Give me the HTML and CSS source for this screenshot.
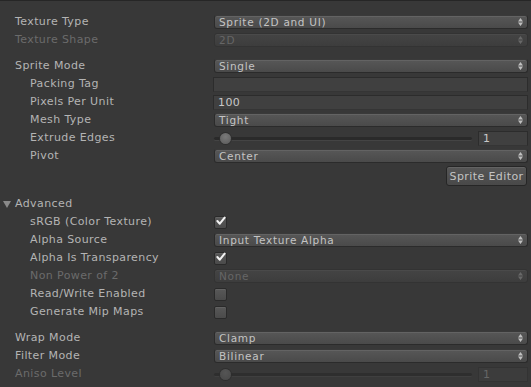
FILE: index.html
```html
<!DOCTYPE html>
<html>
<head>
<meta charset="utf-8">
<link rel="stylesheet" href="styles.css">
</head>
<body>
<div class="inspector">
  <div class="group">
    <div class="row"><span class="label">Texture Type</span><div class="popup"><span>Sprite (2D and UI)</span><svg class="arrows" width="5" height="8" viewBox="0 0 5 8"><path d="M0 3.5 L2.5 0 L5 3.5Z M0 4.5 L2.5 8 L5 4.5Z"/></svg></div></div>
    <div class="row disabled"><span class="label">Texture Shape</span><div class="popup"><span>2D</span><svg class="arrows" width="5" height="8" viewBox="0 0 5 8"><path d="M0 3.5 L2.5 0 L5 3.5Z M0 4.5 L2.5 8 L5 4.5Z"/></svg></div></div>
  </div>
  <div class="group">
    <div class="row"><span class="label">Sprite Mode</span><div class="popup"><span>Single</span><svg class="arrows" width="5" height="8" viewBox="0 0 5 8"><path d="M0 3.5 L2.5 0 L5 3.5Z M0 4.5 L2.5 8 L5 4.5Z"/></svg></div></div>
    <div class="row"><span class="label indent">Packing Tag</span><div class="field"></div></div>
    <div class="row"><span class="label indent">Pixels Per Unit</span><div class="field"><span>100</span></div></div>
    <div class="row"><span class="label indent">Mesh Type</span><div class="popup"><span>Tight</span><svg class="arrows" width="5" height="8" viewBox="0 0 5 8"><path d="M0 3.5 L2.5 0 L5 3.5Z M0 4.5 L2.5 8 L5 4.5Z"/></svg></div></div>
    <div class="row"><span class="label indent">Extrude Edges</span><div class="slider"><div class="track"><div class="thumb"></div></div><div class="field num"><span>1</span></div></div></div>
    <div class="row"><span class="label indent">Pivot</span><div class="popup"><span>Center</span><svg class="arrows" width="5" height="8" viewBox="0 0 5 8"><path d="M0 3.5 L2.5 0 L5 3.5Z M0 4.5 L2.5 8 L5 4.5Z"/></svg></div></div>
    <div class="btnrow"><button class="button">Sprite Editor</button></div>
  </div>
  <div class="group">
    <div class="row"><span class="label foldout"><svg class="tri" width="8" height="8" viewBox="0 0 8 8"><path d="M0 1 L8 1 L4 8Z"/></svg>Advanced</span></div>
    <div class="row"><span class="label indent">sRGB (Color Texture)</span><div class="check on"><svg width="11" height="10" viewBox="0 0 11 10"><path d="M1.5 5 L4.2 8 L9.5 1.2" fill="none" stroke="#f2f2f2" stroke-width="2.2" stroke-linecap="round" stroke-linejoin="round"/></svg></div></div>
    <div class="row"><span class="label indent">Alpha Source</span><div class="popup"><span>Input Texture Alpha</span><svg class="arrows" width="5" height="8" viewBox="0 0 5 8"><path d="M0 3.5 L2.5 0 L5 3.5Z M0 4.5 L2.5 8 L5 4.5Z"/></svg></div></div>
    <div class="row"><span class="label indent">Alpha Is Transparency</span><div class="check on"><svg width="11" height="10" viewBox="0 0 11 10"><path d="M1.5 5 L4.2 8 L9.5 1.2" fill="none" stroke="#f2f2f2" stroke-width="2.2" stroke-linecap="round" stroke-linejoin="round"/></svg></div></div>
    <div class="row disabled"><span class="label indent">Non Power of 2</span><div class="popup"><span>None</span><svg class="arrows" width="5" height="8" viewBox="0 0 5 8"><path d="M0 3.5 L2.5 0 L5 3.5Z M0 4.5 L2.5 8 L5 4.5Z"/></svg></div></div>
    <div class="row"><span class="label indent">Read/Write Enabled</span><div class="check"></div></div>
    <div class="row"><span class="label indent">Generate Mip Maps</span><div class="check"></div></div>
  </div>
  <div class="group">
    <div class="row"><span class="label">Wrap Mode</span><div class="popup"><span>Clamp</span><svg class="arrows" width="5" height="8" viewBox="0 0 5 8"><path d="M0 3.5 L2.5 0 L5 3.5Z M0 4.5 L2.5 8 L5 4.5Z"/></svg></div></div>
    <div class="row"><span class="label">Filter Mode</span><div class="popup"><span>Bilinear</span><svg class="arrows" width="5" height="8" viewBox="0 0 5 8"><path d="M0 3.5 L2.5 0 L5 3.5Z M0 4.5 L2.5 8 L5 4.5Z"/></svg></div></div>
    <div class="row disabled"><span class="label">Aniso Level</span><div class="slider"><div class="track"><div class="thumb"></div></div><div class="field num"><span>1</span></div></div></div>
  </div>
</div>
</body>
</html>
```

FILE: styles.css
```css
html, body {
  margin: 0;
  padding: 0;
  background: #383838;
}
body {
  width: 531px;
  height: 387px;
  overflow: hidden;
  font-family: "DejaVu Sans", "Liberation Sans", sans-serif;
  font-size: 11px;
  color: #b4b4b4;
}
.inspector {
  border-top: 1px solid #262626;
  padding: 12px 3px 0 0;
  display: flex;
  flex-direction: column;
  gap: 8px;
}
.group {
  display: flex;
  flex-direction: column;
}
.row {
  height: 18px;
  display: grid;
  grid-template-columns: 214px 1fr;
  align-items: center;
}
.label {
  padding-left: 15px;
  white-space: nowrap;
  line-height: 18px;
  letter-spacing: 0.4px;
}
.label.indent {
  padding-left: 30px;
}
.label.foldout {
  padding-left: 3px;
  display: flex;
  align-items: center;
  gap: 4px;
}
.tri {
  fill: #8a8a8a;
}
.disabled .label {
  color: #6b6b6b;
}
.popup {
  height: 14px;
  box-sizing: border-box;
  border-radius: 3px;
  background: linear-gradient(#575757, #4a4a4a);
  border: 1px solid #2b2b2b;
  border-top-color: #3a3a3a;
  box-shadow: inset 0 1px 0 #636363;
  display: flex;
  align-items: center;
  justify-content: space-between;
  padding: 0 4px 0 4px;
  color: #c4c4c4;
  font-size: 10.5px;
  letter-spacing: 0.7px;
}
.popup .arrows {
  fill: #c0c0c0;
}
.disabled .popup {
  background: linear-gradient(#444, #3d3d3d);
  box-shadow: inset 0 1px 0 #4a4a4a;
  border-color: #333;
  color: #666;
}
.disabled .popup .arrows {
  fill: #686868;
}
.field {
  height: 15px;
  box-sizing: border-box;
  background: #404040;
  border: 1px solid #2c2c2c;
  border-bottom-color: #353535;
  margin-left: -1px;
  padding-left: 4px;
  display: flex;
  align-items: center;
  color: #c8c8c8;
  font-size: 11px;
  letter-spacing: 0.4px;
}
.slider {
  display: flex;
  align-items: center;
  gap: 6px;
}
.track {
  flex: 1;
  height: 3px;
  border-radius: 2px;
  background: #2a2a2a;
  box-shadow: 0 1px 0 #444;
  position: relative;
}
.thumb {
  position: absolute;
  left: 6px;
  top: -4px;
  width: 11px;
  height: 11px;
  border-radius: 50%;
  background: radial-gradient(circle at 50% 35%, #7a7a7a, #5a5a5a);
  box-shadow: 0 0 0 1px #2e2e2e;
}
.field.num {
  width: 50px;
  margin-left: 0;
  flex: none;
}
.disabled .thumb {
  background: radial-gradient(circle at 50% 35%, #555, #474747);
}
.disabled .field {
  color: #666;
  background: #3c3c3c;
  border-color: #333;
}
.disabled .track {
  background: #2e2e2e;
  box-shadow: 0 1px 0 #3f3f3f;
}
.btnrow {
  display: flex;
  justify-content: flex-end;
  margin-top: 1px;
  margin-bottom: 1px;
}
.button {
  height: 20px;
  width: 81px;
  margin-right: 1px;
  border-radius: 3px;
  border: 1px solid #262626;
  background: linear-gradient(#565656, #494949);
  box-shadow: inset 0 1px 0 #636363;
  color: #c4c4c4;
  font-family: "DejaVu Sans", sans-serif;
  font-size: 11px;
  padding: 0;
  letter-spacing: 0.4px;
}
.check {
  width: 13px;
  height: 13px;
  box-sizing: border-box;
  border-radius: 2px;
  background: linear-gradient(#585858, #4b4b4b);
  border: 1px solid #2a2a2a;
  box-shadow: inset 0 1px 0 #626262;
  display: flex;
  align-items: center;
  justify-content: center;
}
.check svg {
  margin-top: -3px;
  margin-left: 1px;
}
```
